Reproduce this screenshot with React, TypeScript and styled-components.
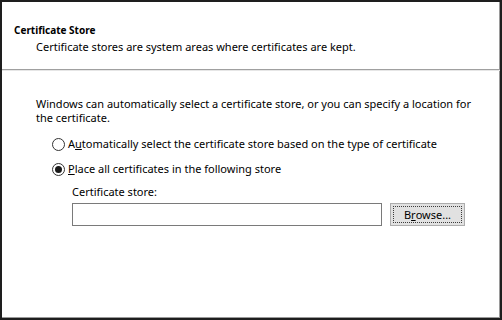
import styled, { createGlobalStyle } from 'styled-components'

const GlobalStyle = createGlobalStyle`
  html, body {
    margin: 0;
    padding: 0;
    background: #ffffff;
  }
  body {
    font-family: 'Noto Sans', 'Open Sans', 'Liberation Sans', sans-serif;
    font-size: 11px;
    color: #000000;
  }
`

const Frame = styled.div`
  box-sizing: border-box;
  width: 502px;
  height: 320px;
  border: 2px solid #1e1e1e;
  box-shadow: inset -1px -1px 0 #9a9a9a;
  background: #ffffff;
  display: flex;
  flex-direction: column;
`

const Header = styled.header`
  padding: 21px 0 15px 12px;
  display: flex;
  flex-direction: column;
  gap: 1px;
`

const Title = styled.h1`
  margin: 0;
  font-size: 10px;
  font-weight: 700;
  line-height: 15px;
`

const Subtitle = styled.p`
  margin: 0;
  padding-left: 22px;
  line-height: 15px;
`

const Separator = styled.hr`
  margin: 0;
  border: 0;
  height: 1px;
  background: #a0a0a0;
  box-shadow: 0 1px 0 #e6e6e6;
`

const Body = styled.section`
  padding: 27px 28px 0 34px;
  display: flex;
  flex-direction: column;
`

const Intro = styled.p`
  margin: 0 0 11px;
  line-height: 14px;
`

const Options = styled.div`
  display: flex;
  flex-direction: column;
  gap: 9px;
  padding-left: 16px;
`

const OptionRow = styled.label`
  display: flex;
  align-items: center;
  gap: 3px;
  height: 16px;
  line-height: 16px;
`

const Radio = styled.span<{ checked?: boolean }>`
  box-sizing: border-box;
  width: 13px;
  height: 13px;
  border-radius: 50%;
  border: 1px solid #333333;
  background: #ffffff;
  display: flex;
  align-items: center;
  justify-content: center;
  flex-shrink: 0;

  &::after {
    content: '';
    width: 7px;
    height: 7px;
    border-radius: 50%;
    background: ${({ checked }) => (checked ? '#1a1a1a' : 'transparent')};
  }
`

const Key = styled.span`
  text-decoration: underline;
`

const StoreBlock = styled.div`
  padding-left: 36px;
  margin-top: 7px;
  display: flex;
  flex-direction: column;
  gap: 3px;
`

const FieldLabel = styled.div`
  line-height: 16px;
`

const FieldRow = styled.div`
  display: flex;
  align-items: center;
  gap: 8px;
`

const TextBox = styled.div`
  box-sizing: border-box;
  width: 310px;
  height: 23px;
  border: 1px solid #7a7a7a;
  background: #ffffff;
`

const Button = styled.button`
  box-sizing: border-box;
  width: 75px;
  height: 23px;
  padding: 2px;
  border: 1px solid #adadad;
  background: #e1e1e1;
  font: inherit;
  color: #000000;
  display: flex;
`

const ButtonFocus = styled.span`
  flex: 1;
  display: flex;
  align-items: center;
  justify-content: center;
  outline: 1px dotted #3c3c3c;
  outline-offset: -1px;
`

export default function App() {
  return (
    <>
      <GlobalStyle />
      <Frame>
        <Header>
          <Title>Certificate Store</Title>
          <Subtitle>Certificate stores are system areas where certificates are kept.</Subtitle>
        </Header>
        <Separator />
        <Body>
          <Intro>
            Windows can automatically select a certificate store, or you can specify a location for
            the certificate.
          </Intro>
          <Options>
            <OptionRow>
              <Radio />
              <span>
                A<Key>u</Key>tomatically select the certificate store based on the type of certificate
              </span>
            </OptionRow>
            <OptionRow>
              <Radio checked />
              <span>
                <Key>P</Key>lace all certificates in the following store
              </span>
            </OptionRow>
          </Options>
          <StoreBlock>
            <FieldLabel>Certificate store:</FieldLabel>
            <FieldRow>
              <TextBox />
              <Button>
                <ButtonFocus>
                  B<Key>r</Key>owse...
                </ButtonFocus>
              </Button>
            </FieldRow>
          </StoreBlock>
        </Body>
      </Frame>
    </>
  )
}
